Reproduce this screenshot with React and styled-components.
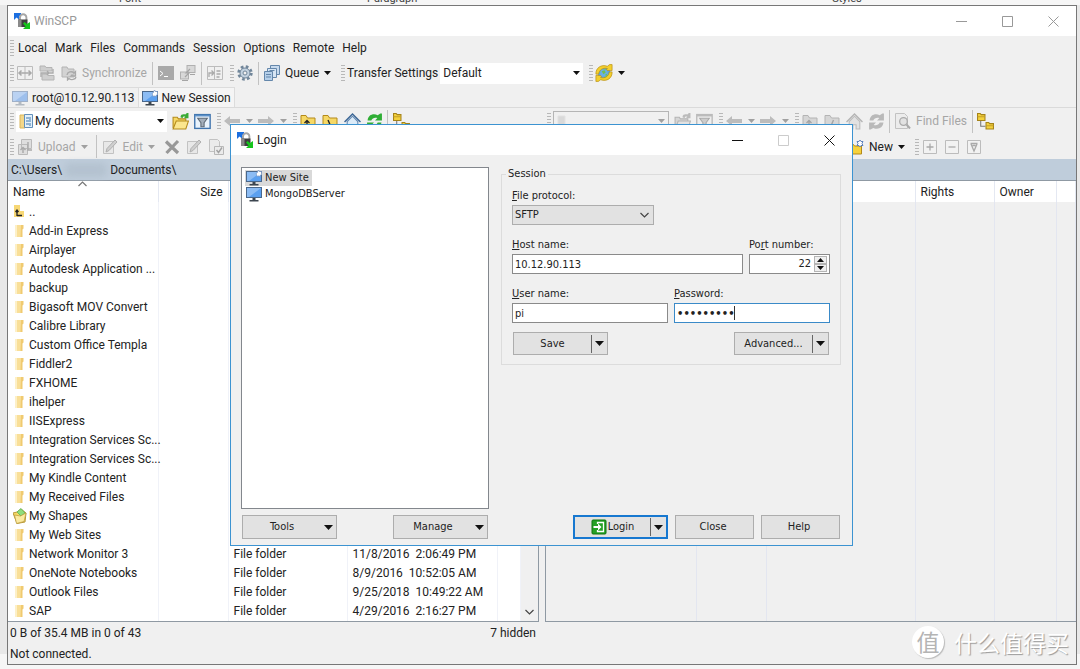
import React from 'react';
import styled, { createGlobalStyle, css } from 'styled-components';

const uiFont = 'Roboto, "Open Sans", sans-serif';
const dialogFont = '"DejaVu Sans Condensed", "Noto Sans", sans-serif';

const GlobalStyle = createGlobalStyle`
  * { box-sizing: border-box; }
  body {
    margin: 0;
    background: #f4f4f4;
    color: #222;
    font: 12px/18px ${uiFont};
  }
  button, input, select { font: inherit; color: inherit; margin: 0; }
  svg { flex: none; }
`;

/* ---------- icons ---------- */

const gold = { fill: '#f6d865', stroke: '#b48a1a', mark: '#222' };
const gray = { fill: '#d6d6d6', stroke: '#b4b4b4', mark: '#a4a4a4' };

const Svg = ({ size = 16, children }) => (
  <svg width={size} height={size} viewBox='0 0 16 16' fill='none' aria-hidden='true'>
    {children}
  </svg>
);

const Logo = () => (
  <Svg>
    <path d='M0 0h7v3H5l1.500 2L5 6.500 2.500 4.500 0 7z' fill='#1c6fe0' />
    <path d='M6 7.500V4.500a3.200 3.200 0 0 1 6.400 0v3' stroke='#a6a6a6' strokeWidth='1.900' />
    <rect x='4' y='6.500' width='9.500' height='7.500' fill='#3f3f3f' />
    <rect x='4' y='6.500' width='3.500' height='7.500' fill='#8a8a8a' />
    <path d='M9 10.500l1.500-1.500 2.500 2L16 9v7H9l2.500-2.500z' fill='#16c41c' />
  </Svg>
);

const Monitor = ({ dim, star }) => (
  <Svg>
    <rect x='0.500' y='1.500' width='15' height='10' fill={dim ? '#9dbfec' : '#5ba0f0'} stroke={dim ? '#9fb0c8' : '#4a688c'} />
    <path d='M1 2h14L3 11H1z' fill='#fff' opacity='0.300' />
    <path d='M6.500 12h3v2h-3z' fill={dim ? '#b3bac2' : '#3c4650'} />
    <path d='M3.500 14h9v1.500h-9z' fill={dim ? '#b3bac2' : '#3c4650'} />
    {star && <path d='M12.500 0l1 1.500h2v2l.5 1-1.500.5-.5 1.500-1.500-.5-1.500.5-.5-2-.5-1 1-.5z' fill='#fff' stroke='#6f8fc0' strokeWidth='0.700' />}
  </Svg>
);

const Columns = () => (
  <Svg>
    <path d='M.5 1.500h15v13H.5zM8 1.500v13' stroke='#bcbcbc' />
    <path d='M2 8h12M4.500 5.500L2 8l2.500 2.500M11.500 5.500L14 8l-2.500 2.500' stroke='#a9a9a9' strokeWidth='1.500' />
  </Svg>
);

const SyncFolders = () => (
  <Svg>
    <path d='M1 1h5l1 1.500h6V6H1zM3 9h5l1 1.500h6V15H3z' fill='#cfcfcf' stroke='#b4b4b4' />
    <path d='M2 12V8h8M8 6l2 2-2 2M14 4v4H7' stroke='#aaa' strokeWidth='1.300' />
  </Svg>
);

const SyncFolder = () => (
  <Svg>
    <path d='M1 2h5l1 2h6v8H1z' fill='#d3d3d3' stroke='#b4b4b4' />
    <path d='M6 10a4 3.500 0 0 1 7-2l1.500-1.500V11H10l1.500-1.500' stroke='#a9a9a9' strokeWidth='1.300' />
    <path d='M15 12a4 3 0 0 1-7 1.500L6.500 15v-3' stroke='#a9a9a9' strokeWidth='1.300' />
  </Svg>
);

const Terminal = () => (
  <Svg>
    <path d='M0 1h16v14H0z' fill='#a9a9a9' />
    <path d='M2 6l3 2.500L2 11M6 11.500h4' stroke='#fff' />
  </Svg>
);

const Putty = () => (
  <Svg>
    <rect x='7' y='.5' width='8' height='7' fill='#d8d8d8' stroke='#b0b0b0' />
    <rect x='.5' y='7' width='8' height='7' fill='#d8d8d8' stroke='#b0b0b0' />
    <path d='M2 15.500h6M10 9.500h5M10 4L6 8h3l-4 4' stroke='#a5a5a5' strokeWidth='1.200' />
  </Svg>
);

const Compare = () => (
  <Svg>
    <path d='M.5 1.500h15v13H.5zM7.500 1.500v13' stroke='#bcbcbc' />
    <path d='M9.500 6h4M9.500 9h4M9.500 12h3M2 12V8h4M4.500 5.500L7 8l-2.500 2.500' stroke='#aaa' strokeWidth='1.300' />
  </Svg>
);

const Gear = () => (
  <Svg>
    <circle cx='8' cy='8' r='6.200' stroke='#71869a' strokeWidth='3' strokeDasharray='2.600 2.269' />
    <circle cx='8' cy='8' r='5' fill='#c3d2e0' stroke='#71869a' />
    <circle cx='8' cy='8' r='2' fill='#f0f0f0' stroke='#71869a' />
  </Svg>
);

const Queue = () => (
  <Svg>
    <path d='M6.500.5h9v9h-9z' fill='#c7daee' stroke='#6487ab' />
    <path d='M3.500 3.500h9v9h-9z' fill='#d6e5f4' stroke='#6487ab' />
    <path d='M.5 6.500h8v9h-8z' fill='#b6d0ea' stroke='#6487ab' />
    <path d='M2 9.500h5M2 12h5M5.500 5.500h5' stroke='#6487ab' />
  </Svg>
);

const Globe = () => (
  <Svg size={18}>
    <circle cx='8' cy='8' r='5.800' fill='#5aa3e0' />
    <path d='M6 5l4-1 1 3-3 2-3-1zM8 11l4-2-1 4-3 .5z' fill='#74c04c' />
    <path d='M.8 9C.5 3.500 5.500 0 11 2l2-1.500h2.200v5.300H9.800L11 4C7 3 4 5 3.200 9z' fill='#f3cf2c' stroke='#b78d12' strokeWidth='.6' />
    <path d='M15.200 7c.3 5.500-4.700 9-10.200 7l-2 1.500H.8v-5.300h5.400L5 12c4 1 7-1 7.800-5z' fill='#f3cf2c' stroke='#b78d12' strokeWidth='.6' />
    <circle cx='8' cy='8' r='3.400' fill='#69aee6' />
    <path d='M6 6.500l2.500-1 1 2-2 1.500zM9 9.500l2-1-1 2.500z' fill='#74c04c' />
  </Svg>
);

const Documents = ({ dim }) => (
  <Svg>
    <path d={dim ? 'M1 3h7v11H1z' : 'M1 2h5v13H1z'} fill={dim ? '#d9d9d9' : '#f3d78a'} stroke={dim ? '#e2e2e2' : '#d9b65c'} />
    {!dim && (
      <>
        <path d='M5.500 1.500h8v13h-8z' fill='#e3f0fa' stroke='#6390ba' />
        <path d='M7 5h3M7 8h5M7 11h3M11 4v3M11 10v3' stroke='#3d78b0' />
      </>
    )}
  </Svg>
);

const OpenFolder = ({ dim }) => {
  const c = dim ? gray : gold;
  return (
    <Svg size={17}>
      <path d='M1 14V4h4l1 1.500h7V8' fill={c.fill} stroke={c.stroke} />
      <path d='M1 15L4 7.500h11.500L13 15z' fill={dim ? '#e2e2e2' : '#fbe68e'} stroke={c.stroke} />
      <path d='M8 4c0-3 3-3 4.500-2.500L14 0h1.500v5H11l1.500-1.500C11 3 10 3.500 10 5z' fill={dim ? '#bbb' : '#39ab35'} />
    </Svg>
  );
};

const Filter = ({ dim }) => (
  <Svg size={17}>
    <rect x='.7' y='1.500' width='14.500' height='13' fill={dim ? '#efefef' : '#e9f3fc'} stroke={dim ? '#bbb' : '#3f74ae'} strokeWidth='1.300' />
    <path d='M1 2.500h14' stroke={dim ? '#bbb' : '#5b8fc6'} strokeWidth='1.500' />
    <path d='M3.500 5h9L9.500 9v4h-3V9z' fill={dim ? '#ccc' : '#a3aeba'} stroke={dim ? '#aaa' : '#5d6975'} />
  </Svg>
);

const Arrow = ({ right }) => (
  <Svg>
    <path d={right ? 'M16 8l-6-5v3H0v4h10v3z' : 'M0 8l6-5v3h10v4H6v3z'} fill='#bcbcbc' />
  </Svg>
);

const FolderGlyph = ({ dim, slash }) => {
  const c = dim ? gray : gold;
  return (
    <Svg>
      <path d='M1 15V2.500h5L7.500 5H15v10z' fill={c.fill} stroke={c.stroke} />
      {slash
        ? <path d={dim ? 'M9.500 7l-3 7' : 'M6 7l3 7'} stroke={c.mark} strokeWidth='1.400' />
        : <path d='M7 13V7.500M4.500 10L7 7.500 9.500 10M7 13h3' stroke={c.mark} strokeWidth='1.300' />}
    </Svg>
  );
};

const Home = ({ dim }) => (
  <Svg size={17}>
    <path d='M3 8v7h3.500v-4h3v4H13V8L8 3z' fill={dim ? '#e2e2e2' : '#dcebf8'} stroke={dim ? '#bbb' : '#5f86b0'} />
    <path d='M.5 8.500L8 1 15.500 8.500' stroke={dim ? '#b4b4b4' : '#3a6595'} strokeWidth='1.300' />
  </Svg>
);

const Refresh = ({ dim }) => (
  <Svg size={17}>
    <path d='M1.500 7C2 1.500 7 0 11 2L13.500.5H15V7H8.500l2.200-2.200C8.500 4 6 4.500 5 7z' fill={dim ? '#b9b9b9' : '#2fae35'} />
    <path d='M14.500 9c-.5 5.500-5.500 7-9.500 5L2.500 15.500H1V9h6.500l-2.200 2.200c2.200.8 4.700.3 5.700-2.200z' fill={dim ? '#b9b9b9' : '#2fae35'} />
  </Svg>
);

const Tree = () => (
  <Svg size={17}>
    <path d='M3.500 7v5.500H8' stroke='#777' />
    <path d='M.5 7V.5H3l1 1h3.500V7z' fill='#f3d13c' stroke='#a5831a' />
    <path d='M8.500 15V9H11l1 1h3.500v5z' fill='#f3d13c' stroke='#a5831a' />
    <path d='M.5 3.500h7M8.500 12h7' stroke='#c49e28' />
  </Svg>
);

const FindIcon = () => (
  <Svg>
    <path d='M.5.5h9l3 3v12H.5z' fill='#ececec' stroke='#c2c2c2' />
    <circle cx='8.500' cy='8.500' r='3.800' fill='#e2e2e2' stroke='#aaa' strokeWidth='1.300' />
    <path d='M11.500 11.500l3.500 4' stroke='#aaa' strokeWidth='2' />
  </Svg>
);

const UploadIcon = () => (
  <Svg>
    <path d='M4.500.5h10v9h-10zM1.500 5.500h9v10h-9z' fill='#dedede' stroke='#bababa' />
    <path d='M6 14V8.500M3.500 11L6 8.500 8.500 11M11 3v8h4' stroke='#a9a9a9' strokeWidth='1.400' />
  </Svg>
);

const EditIcon = () => (
  <Svg>
    <path d='M1.500 2.500h10v12h-10z' fill='#e8e8e8' stroke='#c2c2c2' />
    <path d='M4 13l1-3.500L13 1l2 2-8 8.500z' fill='#cfcfcf' stroke='#b0b0b0' />
  </Svg>
);

const DeleteIcon = () => (
  <Svg>
    <path d='M2 2.500l12 11.500M14 2L2.500 14' stroke='#989898' strokeWidth='3.200' />
  </Svg>
);

const CheckIcon = () => (
  <Svg>
    <path d='M1.500.5h8l2 2v10h-10z' fill='#ebebeb' stroke='#c2c2c2' />
    <path d='M6.500 7.500h9v8h-9z' fill='#ebebeb' stroke='#b8b8b8' />
    <path d='M8.500 11l2 2.500 3.500-5' stroke='#a2a2a2' strokeWidth='1.400' />
  </Svg>
);

const NewFolder = () => (
  <Svg>
    <path d='M.5 15V5.500h5L6.500 7h7v8z' fill='#f6d23c' stroke='#b48a1a' />
    <path d='M12 1l1 1.500h2l-1 2 1 2h-2L12 8l-1-1.500H9l1-2-1-2h2z' fill='#fff' stroke='#5f83bd' />
  </Svg>
);

const boxMarks = {
  plus: 'M8 4.500v7M4.500 8h7',
  minus: 'M4.500 8h7',
  vee: 'M4.500 4.500h7M5 5l3 7 3-7M6.500 6.500h3',
};

const BoxIcon = ({ mark }) => (
  <Svg>
    <path d='M1.500 1.500h13v13h-13z' fill='#f2f2f2' stroke='#bcbcbc' />
    <path d={boxMarks[mark]} stroke='#a9a9a9' strokeWidth='1.300' />
  </Svg>
);

const Folder = () => (
  <Svg>
    <path d='M2 2h7v12H2z' fill='#f9df98' />
    <path d='M8 2h2.500v3.500l-1 1V14H7.500z' fill='#f0ca70' />
    <path d='M2 2h2v12H2z' fill='#fdf0c8' />
  </Svg>
);

const ParentDir = () => (
  <Svg>
    <path d='M1 1h6v12H1zM6 7h5v6H6z' fill='#f7d774' />
    <path d='M4 12V6M2.500 8L4 6l1.500 2M4 11.500h5' stroke='#222' strokeWidth='1.300' />
  </Svg>
);

const Shapes = () => (
  <Svg>
    <path d='M0 5l4-1 4-3 5 4-1 9-8 1.500z' fill='#f6d865' stroke='#b99a3c' />
    <path d='M4 4l4-3.500L12 5 8 8z' fill='#8fdc7c' stroke='#58b050' strokeWidth='.7' />
    <path d='M1.500 7l6 1 5.500-3-2 8.500-7.500 2z' fill='#fbeaa0' stroke='#b99a3c' strokeWidth='.7' />
  </Svg>
);

const LoginIcon = () => (
  <Svg>
    <rect x='1' y='1' width='14' height='14' rx='1' fill='#25a125' stroke='#107510' />
    <path d='M6.500 5V3.500h6v9h-6V11' stroke='#fff' strokeWidth='1.300' />
    <path d='M2.500 7H7V4.500L10.500 8 7 11.500V9H2.500z' fill='#fff' />
  </Svg>
);

const Caret = ({ wide, up, color = '#111' }) => (
  <svg width={wide ? 9 : 7} height={wide ? 5 : 4} viewBox='0 0 8 4' preserveAspectRatio='none' aria-hidden='true'>
    <path d={up ? 'M0 4h8L4 0z' : 'M0 0h8L4 4z'} fill={color} />
  </svg>
);

const Chevron = ({ up, color = '#444' }) => (
  <svg width='9' height='6' viewBox='0 0 9 6' fill='none' aria-hidden='true'>
    <path d={up ? 'M.5 5l4-4 4 4' : 'M.5 1l4 4 4-4'} stroke={color} strokeWidth='1.200' />
  </svg>
);

const CaptionIcon = ({ kind }) => (
  <svg width='11' height='11' viewBox='0 0 11 11' fill='none' stroke='currentColor' aria-hidden='true'>
    {kind === 'Minimize' && <path d='M0 5.500h11' />}
    {kind === 'Maximize' && <path d='M.5.5h10v10H.5z' />}
    {kind === 'Close' && <path d='M.5.5l10 10M10.500.5l-10 10' />}
  </svg>
);

/* ---------- main window ---------- */

const Page = styled.div`
  display: flex;
  flex-direction: column;
  height: 100vh;
  padding: 0 3px 4px 7px;
  background: linear-gradient(#e8e8e8, #e8e8e8) 0 5px / 100% calc(100% - 20px) no-repeat #f6f6f6;
  overflow: hidden;
`;

const Behind = styled.div`
  display: grid;
  grid-template-columns: 23% 26% 59%;
  grid-template-rows: 5px;
  align-items: end;
  height: 5px;
  overflow: hidden;
  font-size: 11px;
  line-height: 12px;
  text-align: center;
  color: #444;
`;

const Window = styled.main`
  position: relative;
  flex: 1;
  min-height: 0;
  display: flex;
  flex-direction: column;
  border: 1px solid #777;
  background: #f0f0f0;
`;

const TitleBar = styled.header`
  display: flex;
  align-items: center;
  height: 30px;
  padding-left: 6px;
  background: #fff;
  color: ${({ $active }) => ($active ? '#222' : '#999')};
`;

const Title = styled.h1`
  flex: 1;
  margin: 0 0 0 4px;
  font: 12px/18px ${uiFont};
`;

const CaptionButton = styled.button`
  width: 46px;
  height: 30px;
  padding: 0;
  border: 0;
  background: none;
  display: grid;
  place-items: center;
  color: ${({ $active }) => ($active ? '#111' : '#999')};
  &:disabled { color: #ccc; }
`;

const Toolbar = styled.div`
  display: flex;
  align-items: center;
  height: ${({ $height }) => $height || 26}px;
  padding-left: ${({ $indent }) => $indent || 2}px;
  white-space: nowrap;
`;

const Grip = styled.span`
  width: 4px;
  height: 16px;
  margin-left: ${({ $gap }) => $gap || 0}px;
  background: repeating-linear-gradient(#b8b8b8 0 1px, transparent 1px 3px);
`;

const Sep = styled.span`
  width: 1px;
  height: 23px;
  margin: 0 2px;
  background: #c2c2c2;
`;

const ToolButton = styled.button`
  display: flex;
  align-items: center;
  justify-content: center;
  gap: 5px;
  height: 22px;
  min-width: ${({ $narrow }) => ($narrow ? 12 : 22)}px;
  padding: 0 ${({ $text }) => ($text ? 3 : 0)}px;
  border: 0;
  background: none;
  white-space: nowrap;
  &:disabled { color: #a6a6a6; }
`;

const MenuItem = styled.button`
  height: 22px;
  padding: 0 4px;
  border: 0;
  background: none;
  white-space: nowrap;
`;

const Combo = styled.div`
  display: flex;
  align-items: center;
  height: 21px;
  width: ${({ $width }) => $width}px;
  margin: 0 2px;
  padding: 0 3px;
  background: ${({ $off }) => ($off ? '#f0f0f0' : '#fff')};
  border: ${({ $off }) => ($off ? '1px solid #b5b5b5' : '0')};
`;

const PlainSelect = styled.select`
  flex: 1;
  min-width: 0;
  appearance: none;
  border: 0;
  padding: 0;
  background: none;
`;

const ToolLabel = styled.label`
  padding-left: 2px;
`;

const DropBox = styled.span`
  display: flex;
  padding-right: 3px;
`;

const Tabs = styled.nav`
  display: flex;
  height: 22px;
  padding: 1px 1px 0;
  border-bottom: 1px solid #dadada;
`;

const Tab = styled.button`
  display: flex;
  align-items: center;
  gap: 4px;
  padding: 0 3px;
  border: 1px solid #dcdcdc;
  border-width: 1px 1px 0 0;
  background: ${({ $current }) => ($current ? '#f5f5f5' : '#f0f0f0')};
`;

const Panels = styled.div`
  flex: 1;
  min-height: 0;
  display: grid;
  grid-template-columns: 1fr 1fr;
  gap: 6px;
`;

const Panel = styled.section`
  display: flex;
  flex-direction: column;
  min-width: 0;
  min-height: 0;
`;

const PathBar = styled.div`
  display: flex;
  align-items: center;
  height: 21px;
  padding-left: 3px;
  background: #bfcddb;
`;

const Redacted = styled.span`
  width: 42px;
  height: 14px;
  margin: 0 3px;
  border-radius: 6px;
  background: #b4c2d0;
  filter: blur(3px);
`;

const ListFrame = styled.div`
  flex: 1;
  min-height: 0;
  display: flex;
  overflow: hidden;
  border: 1px solid #8f99a3;
  border-left-width: ${({ $off }) => ($off ? 1 : 0)}px;
  border-right-width: ${({ $off }) => ($off ? 0 : 1)}px;
  background: ${({ $off }) => ($off ? '#f0f0f0' : '#fff')};
`;

const FileTable = styled.table`
  flex: 1;
  width: 100%;
  table-layout: fixed;
  border-collapse: collapse;
`;

const Th = styled.th`
  position: relative;
  height: 21px;
  padding: 0 5px;
  border-right: 1px solid #e4e8f2;
  background: #fff;
  font-weight: 400;
  text-align: ${({ $right }) => ($right ? 'right' : 'left')};
`;

const SortMark = styled.span`
  position: absolute;
  inset: 0;
  display: flex;
  justify-content: center;
`;

const Td = styled.td`
  height: ${({ $fill }) => ($fill ? 'auto' : '19px')};
  padding: 0 5px;
  border-right: 1px solid ${({ $fill }) => ($fill ? '#e3e6f0' : '#f0f2f8')};
  white-space: pre;
`;

const FileName = styled.span`
  display: flex;
  align-items: center;
  height: 19px;
`;

const Scroll = styled.div`
  width: 17px;
  display: flex;
  align-items: end;
  justify-content: center;
  padding-bottom: 6px;
  background: #f0f0f0;
`;

const Status = styled.footer`
  display: grid;
  grid-template-columns: 1fr 1fr;
  grid-auto-rows: 21px;
  column-gap: 6px;
  align-items: center;
  padding-left: 2px;
`;

const StatusSide = styled.div`
  display: flex;
  justify-content: space-between;
  padding-right: 4px;
`;

const Watermark = styled.div`
  position: absolute;
  right: 7px;
  bottom: 5px;
  display: flex;
  align-items: center;
  gap: 10px;
  color: #fff;
  font: 23px/34px "Noto Sans CJK SC", sans-serif;
  text-shadow: 1px 1px 1px #999;
`;

const WatermarkBadge = styled.span`
  width: 32px;
  height: 32px;
  border-radius: 50%;
  background: #fff;
  box-shadow: 1px 1px 1px #bbb;
  color: #b4b4b4;
  font-size: 23px;
  line-height: 30px;
  text-align: center;
  text-shadow: none;
`;

/* ---------- login dialog ---------- */

const Overlay = styled.div`
  position: absolute;
  inset: 0;
  display: grid;
  place-items: center;
  padding-right: 1px;
`;

const Dialog = styled.div`
  width: 623px;
  border: 1px solid #3c93d1;
  background: #f0f0f0;
  font: 11px/14px ${dialogFont};
`;

const DialogBody = styled.form`
  display: grid;
  grid-template-columns: 248px 1fr;
  gap: 6px 12px;
  padding: 12px 11px 6px 10px;
`;

const SiteList = styled.ul`
  height: 342px;
  margin: 0;
  padding: 2px 3px;
  list-style: none;
  border: 1px solid #83878d;
  background: #fff;
`;

const Site = styled.li`
  display: flex;
  align-items: center;
  height: 16px;
`;

const SiteName = styled.span`
  display: flex;
  align-items: center;
  gap: 3px;
  height: 16px;
  padding: 0 3px 0 1px;
  background: ${({ $selected }) => ($selected ? '#d9d9d9' : 'none')};
`;

const Session = styled.fieldset`
  align-self: start;
  min-width: 0;
  margin: 0;
  padding: 8px 10px 9px;
  border: 1px solid #dcdcdc;
`;

const Legend = styled.legend`
  margin-left: -6px;
  padding: 0 2px;
  height: 14px;
`;

const FieldRow = styled.div`
  display: grid;
  grid-template-columns: ${({ $columns }) => $columns};
  gap: 6px;
  margin-bottom: ${({ $last }) => ($last ? 9 : 13)}px;
`;

const Field = styled.div`
  display: grid;
  grid-template-columns: minmax(0, 1fr);
  gap: 2px;
`;

const boxed = css`
  width: 100%;
  height: 20px;
  border: 1px solid #8a8a8a;
  background: #fff;
`;

const TextInput = styled.input`
  ${boxed}
  padding: 0 2px;
  outline: 0;
`;

const PasswordInput = styled(TextInput)`
  border-color: #3a8ac8;
  font: 700 10px/14px "DejaVu Sans", sans-serif;
  caret-color: transparent;
  background: linear-gradient(#333, #333) 59px center / 1px 14px no-repeat #fff;
`;

const Protocol = styled.div`
  ${boxed}
  display: flex;
  align-items: center;
  padding: 0 4px 0 2px;
  border-color: #adadad;
  background: #e2e2e2;
`;

const Spinner = styled.div`
  ${boxed}
  display: flex;
  align-items: center;
  padding: 0 2px;
  gap: 3px;
`;

const PortInput = styled.input`
  flex: 1;
  min-width: 0;
  padding: 0;
  border: 0;
  text-align: right;
  appearance: textfield;
  &::-webkit-inner-spin-button { display: none; }
`;

const SpinButton = styled.button`
  display: grid;
  place-items: center;
  width: 13px;
  height: 8px;
  padding: 0;
  border: 1px solid #b5b5b5;
  background: #f0f0f0;
`;

const ButtonBar = styled.div`
  display: flex;
  justify-content: ${({ $end }) => ($end ? 'flex-end' : 'space-between')};
  gap: 7px;
  padding: 0 1px;
`;

const PushButton = styled.button`
  display: flex;
  align-items: center;
  width: ${({ $short }) => ($short ? 79 : 95)}px;
  height: ${({ $low }) => ($low ? 23 : 24)}px;
  padding: 0 3px 0 0;
  border: ${({ $primary }) => ($primary ? '2px solid #1778d0' : '1px solid #adadad')};
  background: #e2e2e2;
`;

const ButtonText = styled.span`
  flex: 1;
  display: flex;
  align-items: center;
  justify-content: center;
  gap: 1px;
`;

const Split = styled.span`
  display: flex;
  align-items: center;
  height: 18px;
  padding-left: 3px;
  border-left: ${({ $bare }) => ($bare ? '0' : '1px solid #666')};
`;

const files = [
  { name: '..', icon: ParentDir },
  { name: 'Add-in Express' },
  { name: 'Airplayer' },
  { name: 'Autodesk Application ...' },
  { name: 'backup' },
  { name: 'Bigasoft MOV Convert' },
  { name: 'Calibre Library' },
  { name: 'Custom Office Templa' },
  { name: 'Fiddler2' },
  { name: 'FXHOME' },
  { name: 'ihelper' },
  { name: 'IISExpress' },
  { name: 'Integration Services Sc...' },
  { name: 'Integration Services Sc...' },
  { name: 'My Kindle Content' },
  { name: 'My Received Files' },
  { name: 'My Shapes', icon: Shapes },
  { name: 'My Web Sites' },
  { name: 'Network Monitor 3', type: 'File folder', changed: '11/8/2016  2:06:49 PM' },
  { name: 'OneNote Notebooks', type: 'File folder', changed: '8/9/2016  10:52:05 AM' },
  { name: 'Outlook Files', type: 'File folder', changed: '9/25/2018  10:49:22 AM' },
  { name: 'SAP', type: 'File folder', changed: '4/29/2016  2:16:27 PM' },
];

const menus = ['Local', 'Mark', 'Files', 'Commands', 'Session', 'Options', 'Remote', 'Help'];

const Tool = ({ icon, label, drop, off }) => (
  <ToolButton disabled={off} $text={!!label} aria-label={label ? undefined : 'Tool'}>
    {icon}
    {label}
    {drop && <DropBox><Caret color={off ? '#a0a0a0' : '#111'} /></DropBox>}
  </ToolButton>
);

const DropButton = ({ off }) => (
  <ToolButton $narrow disabled={off} aria-label='More'>
    <Caret color={off ? '#a0a0a0' : '#111'} />
  </ToolButton>
);

const Captions = ({ active }) => (
  ['Minimize', 'Maximize', 'Close'].map(kind => (
    <CaptionButton key={kind} type='button' $active={active} aria-label={kind}
      disabled={active && kind === 'Maximize'}>
      <CaptionIcon kind={kind} />
    </CaptionButton>
  ))
);

const MainToolbar = () => (
  <Toolbar>
    <Grip />
    <Tool off icon={<Columns />} />
    <Tool off icon={<SyncFolders />} />
    <Tool off icon={<SyncFolder />} label='Synchronize' />
    <Sep />
    <Tool off icon={<Terminal />} />
    <Tool off icon={<Putty />} />
    <Sep />
    <Tool off icon={<Compare />} />
    <Grip $gap={4} />
    <Tool icon={<Gear />} />
    <Sep />
    <Tool icon={<Queue />} label='Queue' drop />
    <Grip $gap={4} />
    <ToolLabel htmlFor='transfer'>Transfer Settings</ToolLabel>
    <Combo $width={143}>
      <PlainSelect id='transfer' defaultValue='Default'><option>Default</option></PlainSelect>
      <Caret />
    </Combo>
    <Grip $gap={4} />
    <Tool icon={<Globe />} />
    <DropButton />
  </Toolbar>
);

const NavTools = ({ off }) => (
  <>
    <Tool off={off} icon={<OpenFolder dim={off} />} />
    <Tool off={off} icon={<Filter dim={off} />} />
    <Grip $gap={4} />
    <Tool off icon={<Arrow />} />
    <DropButton off />
    <Tool off icon={<Arrow right />} />
    <DropButton off />
    <Grip $gap={4} />
    <Tool off={off} icon={<FolderGlyph dim={off} />} />
    <Tool off={off} icon={<FolderGlyph dim={off} slash />} />
    <Tool off={off} icon={<Home dim={off} />} />
    <Tool off={off} icon={<Refresh dim={off} />} />
    <Sep />
  </>
);

const LocalPanel = () => (
  <Panel>
    <Toolbar>
      <Grip />
      <Combo $width={151}>
        <Documents />
        <PlainSelect aria-label='Local directory' defaultValue='My documents'><option>My documents</option></PlainSelect>
        <Caret />
      </Combo>
      <NavTools />
      <Tool icon={<Tree />} />
    </Toolbar>
    <Toolbar $height={25}>
      <Grip />
      <Tool off icon={<UploadIcon />} label='Upload' drop />
      <Sep />
      <Tool off icon={<EditIcon />} label='Edit' drop />
      <Tool off icon={<DeleteIcon />} />
      <Tool off icon={<EditIcon />} />
      <Tool off icon={<CheckIcon />} />
    </Toolbar>
    <PathBar>
      C:\Users\
      <Redacted />
      Documents\
    </PathBar>
    <ListFrame>
      <FileTable>
        <colgroup>
          <col width='150' />
          <col width='70' />
          <col width='119' />
          <col width='150' />
          <col />
        </colgroup>
        <thead>
          <tr>
            <Th>Name<SortMark><Chevron up color='#777' /></SortMark></Th>
            <Th $right>Size</Th>
            <Th />
            <Th />
            <Th />
          </tr>
        </thead>
        <tbody>
          {files.map(({ name, type, changed, icon: Icon = Folder }, i) => (
            <tr key={i}>
              <Td><FileName><Icon />{name}</FileName></Td>
              <Td />
              <Td>{type}</Td>
              <Td>{changed}</Td>
              <Td />
            </tr>
          ))}
        </tbody>
      </FileTable>
      <Scroll><Chevron /></Scroll>
    </ListFrame>
  </Panel>
);

const RemotePanel = () => (
  <Panel>
    <Toolbar>
      <Grip />
      <Combo $off $width={116}>
        <Documents dim />
        <PlainSelect disabled aria-label='Remote directory' />
        <Caret color='#a0a0a0' />
      </Combo>
      <NavTools off />
      <Tool off icon={<FindIcon />} label='Find Files' />
      <Sep />
      <Tool icon={<Tree />} />
    </Toolbar>
    <Toolbar $height={25} $indent={300}>
      <Tool icon={<NewFolder />} label='New' drop />
      <Grip $gap={4} />
      <Tool off icon={<BoxIcon mark='plus' />} />
      <Tool off icon={<BoxIcon mark='minus' />} />
      <Tool off icon={<BoxIcon mark='vee' />} />
    </Toolbar>
    <PathBar />
    <ListFrame $off>
      <FileTable>
        <colgroup>
          <col width='150' />
          <col width='70' />
          <col width='149' />
          <col width='79' />
          <col width='62' />
          <col />
        </colgroup>
        <thead>
          <tr><Th /><Th /><Th /><Th>Rights</Th><Th>Owner</Th><Th /></tr>
        </thead>
        <tbody>
          <tr>{[0, 1, 2, 3, 4, 5].map(i => <Td $fill key={i} />)}</tr>
        </tbody>
      </FileTable>
    </ListFrame>
  </Panel>
);

const LoginDialog = () => (
  <Overlay>
    <Dialog role='dialog' aria-label='Login'>
      <TitleBar $active>
        <Logo />
        <Title as='h2'>Login</Title>
        <Captions active />
      </TitleBar>
      <DialogBody onSubmit={e => e.preventDefault()}>
        <SiteList>
          <Site><SiteName $selected><Monitor star />New Site</SiteName></Site>
          <Site><SiteName><Monitor />MongoDBServer</SiteName></Site>
        </SiteList>
        <Session>
          <Legend>Session</Legend>
          <FieldRow $columns='142px'>
            <Field>
              <label htmlFor='protocol'><u>F</u>ile protocol:</label>
              <Protocol>
                <PlainSelect id='protocol' defaultValue='SFTP'><option>SFTP</option></PlainSelect>
                <Chevron />
              </Protocol>
            </Field>
          </FieldRow>
          <FieldRow $columns='1fr 81px'>
            <Field>
              <label htmlFor='host'><u>H</u>ost name:</label>
              <TextInput id='host' defaultValue='10.12.90.113' />
            </Field>
            <Field>
              <label htmlFor='port'>Po<u>r</u>t number:</label>
              <Spinner>
                <PortInput id='port' type='number' defaultValue='22' />
                <div>
                  <SpinButton type='button' aria-label='Up'><Caret up /></SpinButton>
                  <SpinButton type='button' aria-label='Down'><Caret /></SpinButton>
                </div>
              </Spinner>
            </Field>
          </FieldRow>
          <FieldRow $columns='1fr 1fr' $last>
            <Field>
              <label htmlFor='user'><u>U</u>ser name:</label>
              <TextInput id='user' defaultValue='pi' />
            </Field>
            <Field>
              <label htmlFor='password'><u>P</u>assword:</label>
              <PasswordInput id='password' type='password' defaultValue='raspberry' />
            </Field>
          </FieldRow>
          <ButtonBar>
            <PushButton $low type='button'>
              <ButtonText>Save</ButtonText><Split><Caret wide /></Split>
            </PushButton>
            <PushButton $low type='button'>
              <ButtonText>Advanced...</ButtonText><Split><Caret wide /></Split>
            </PushButton>
          </ButtonBar>
        </Session>
        <ButtonBar>
          <PushButton type='button'>
            <ButtonText>Tools</ButtonText><Split $bare><Caret wide /></Split>
          </PushButton>
          <PushButton type='button'>
            <ButtonText>Manage</ButtonText><Split $bare><Caret wide /></Split>
          </PushButton>
        </ButtonBar>
        <ButtonBar $end>
          <PushButton $primary>
            <ButtonText><LoginIcon />Login</ButtonText><Split><Caret wide /></Split>
          </PushButton>
          <PushButton $short type='button'><ButtonText>Close</ButtonText></PushButton>
          <PushButton $short type='button'><ButtonText>Help</ButtonText></PushButton>
        </ButtonBar>
      </DialogBody>
    </Dialog>
  </Overlay>
);

const App = () => (
  <Page>
    <GlobalStyle />
    <Behind>
      <span>Font</span>
      <span>Paragraph</span>
      <span>Styles</span>
    </Behind>
    <Window>
      <TitleBar>
        <Logo />
        <Title>WinSCP</Title>
        <Captions />
      </TitleBar>
      <Toolbar $height={24}>
        <Grip />
        {menus.map(name => <MenuItem key={name}>{name}</MenuItem>)}
      </Toolbar>
      <MainToolbar />
      <Tabs>
        <Tab><Monitor dim />root@10.12.90.113</Tab>
        <Tab $current><Monitor star />New Session</Tab>
      </Tabs>
      <Panels>
        <LocalPanel />
        <RemotePanel />
      </Panels>
      <Status>
        <StatusSide>
          <span>0 B of 35.4 MB in 0 of 43</span>
          <span>7 hidden</span>
        </StatusSide>
        <span />
        <span>Not connected.</span>
      </Status>
      <LoginDialog />
      <Watermark>
        <WatermarkBadge>值</WatermarkBadge>
        什么值得买
      </Watermark>
    </Window>
  </Page>
);

export default App;
